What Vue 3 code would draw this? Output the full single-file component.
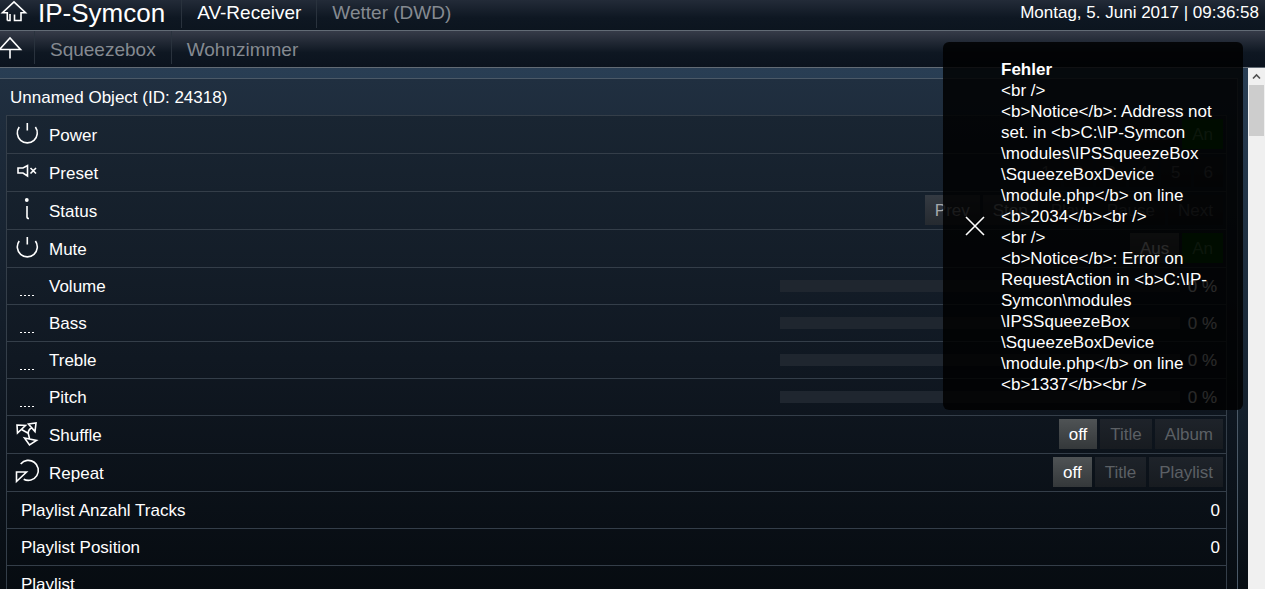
<script setup>
import { ref } from 'vue'

const switchOptions = [{ label: 'Aus', tone: 'on' }, { label: 'An', tone: 'green' }]
const off = (label) => ({ label, tone: 'idle' })

const rows = [
  { label: 'Power', icon: 'power', options: [off('Aus'), { label: 'An', tone: 'green' }] },
  { label: 'Preset', icon: 'speaker', options: ['1', '2', '3', '4', '5', '6'].map(off) },
  { label: 'Status', icon: 'info', options: [{ label: 'Prev', tone: 'dim' }, { label: 'Stop', tone: 'dim' }, off('Play'), off('Pause'), off('Next')] },
  { label: 'Mute', icon: 'power', options: switchOptions },
  { label: 'Volume', icon: 'dots', slider: '0 %' },
  { label: 'Bass', icon: 'dots', slider: '0 %' },
  { label: 'Treble', icon: 'dots', slider: '0 %' },
  { label: 'Pitch', icon: 'dots', slider: '0 %' },
  { label: 'Shuffle', icon: 'shuffle', options: [{ label: 'off', tone: 'on' }, off('Title'), off('Album')] },
  { label: 'Repeat', icon: 'repeat', options: [{ label: 'off', tone: 'on' }, off('Title'), off('Playlist')] },
  { label: 'Playlist Anzahl Tracks', value: '0' },
  { label: 'Playlist Position', value: '0' },
  { label: 'Playlist', value: '' },
]

const message = `<br />
<b>Notice</b>: Address not
set. in <b>C:\\IP-Symcon
\\modules\\IPSSqueezeBox
\\SqueezeBoxDevice
\\module.php</b> on line
<b>2034</b><br />
<br />
<b>Notice</b>: Error on
RequestAction in <b>C:\\IP-
Symcon\\modules
\\IPSSqueezeBox
\\SqueezeBoxDevice
\\module.php</b> on line
<b>1337</b><br />`

const open = ref(true)
</script>

<template>
  <div class="page">
    <header class="bar top">
      <a href="#" class="glyph" aria-label="Home">
        <svg width="28" height="24" viewBox="0 0 28 24"><path d="M7.300 20.500V12.700H2.500L14 1.800L25.500 12.700H21V20.500H14.500V14.500M7.300 20.500H10V14" /></svg>
      </a>
      <a href="#" class="brand">IP-Symcon</a>
      <a href="#" class="tab active">AV-Receiver</a>
      <a href="#" class="tab">Wetter (DWD)</a>
      <time class="clock">Montag, 5. Juni 2017 | 09:36:58</time>
    </header>
    <nav class="bar sub">
      <a href="#" class="glyph up" aria-label="Nach oben">
        <svg width="24" height="24" viewBox="0 0 24 24"><path d="M-0.500 14.500 10 3 20.500 14.500ZM10 14.500V23.500" /></svg>
      </a>
      <a href="#" class="tab">Squeezebox</a>
      <a href="#" class="tab">Wohnzimmer</a>
    </nav>

    <div class="body">
      <main class="content">
        <section class="panel">
          <h1>Unnamed Object (ID: 24318)</h1>
          <ul class="rows">
            <li v-for="row in rows" :key="row.label" class="row" :class="{ tall: row.options }">
              <svg v-if="row.icon" class="icon" width="28" height="28" viewBox="0 0 28 28">
                <path v-if="row.icon === 'power'" d="M13.300 3V10.500M5.200 7A10 10 0 1 0 21.400 7" />
                <path v-else-if="row.icon === 'speaker'" d="M4 10H9L13.500 7.500V18L9 15H4ZM16.500 10 22 15.500M22 10 16.500 15.500" />
                <template v-else-if="row.icon === 'info'">
                  <circle cx="12.800" cy="4" r="1.900" class="solid" />
                  <path d="M13 10V21Q13 22.500 15 22.500" />
                </template>
                <path v-else-if="row.icon === 'dots'" class="dots" d="M6 23.500H21" />
                <path v-else-if="row.icon === 'shuffle'" d="M3 5 11.500 5.500 3.500 13ZM14.500 4 22 3 21 11.500ZM10.500 18 22.500 20.500 15.500 25ZM7.500 9.500 14.200 13.200M18 7.500Q14.200 9.500 14.200 13.200L15.500 18.500" />
                <path v-else d="M6.700 5.900A10 10 0 1 1 9.700 21.200M2.500 14H12.500L2.500 23.500Z" />
              </svg>
              <span class="label">{{ row.label }}</span>
              <div v-if="row.options" class="options">
                <button v-for="o in row.options" :key="o.label" type="button" :class="o.tone">{{ o.label }}</button>
              </div>
              <template v-else-if="row.slider">
                <input type="range" min="0" max="100" value="0" :aria-label="row.label" />
                <span class="percent">{{ row.slider }}</span>
              </template>
              <span v-else class="value">{{ row.value }}</span>
            </li>
          </ul>
        </section>
      </main>
      <div class="scroll" aria-hidden="true">
        <svg width="17" height="17" viewBox="0 0 17 17"><path d="M5 10.500 8.500 7 12 10.500" /></svg>
        <div class="thumb"></div>
      </div>
    </div>

    <aside v-if="open" class="toast" role="alert">
      <button type="button" class="close" aria-label="Schließen" @click="open = false">
        <svg width="20" height="20" viewBox="0 0 20 20"><path d="M1 1 19 19M19 1 1 19" /></svg>
      </button>
      <div>
        <strong>Fehler</strong>
        <p>{{ message }}</p>
      </div>
    </aside>
  </div>
</template>

<style>
body {
  margin: 0;
  background: #070c11;
}
</style>

<style scoped>
.page {
  position: relative;
  display: flex;
  flex-direction: column;
  height: 100vh;
  overflow: hidden;
  color: #fff;
  font: 17px/21px "Liberation Sans", Arial, sans-serif;
}
.bar {
  display: flex;
  flex: none;
  box-sizing: border-box;
  border-bottom: 1px solid #626b75;
  font-size: 19px;
}
.top {
  height: 31px;
  line-height: 26px;
  background: linear-gradient(#232b38, #0e1722 60%, #0c151f);
}
.sub {
  height: 37px;
  line-height: 37px;
  background: linear-gradient(#363b48, #0e1722 60%, #0b131e);
}
.bar a {
  color: #fff;
  text-decoration: none;
}
.glyph {
  width: 28px;
}
.up {
  width: 34px;
  padding-top: 4px;
  box-sizing: border-box;
}
svg {
  display: block;
  fill: none;
  stroke: #fff;
  stroke-width: 1.6;
}
.bar .brand {
  padding: 0 16px 0 10px;
  font-size: 26px;
}
.bar .tab {
  height: 28px;
  padding: 0 15px;
  border-left: 1px solid #29323d;
  color: #858a91;
}
.sub .tab {
  height: 33px;
}
.bar .tab.active {
  color: #fff;
}
.clock {
  margin-left: auto;
  padding-right: 6px;
  font-size: 17px;
}
.body {
  display: flex;
  flex: 1;
  min-height: 0;
}
.content {
  flex: 1;
  min-width: 0;
  overflow: hidden;
  padding: 10px 10px 0 0;
  background: linear-gradient(#293e54, #1a2938 50%, #070d13);
}
.panel {
  padding: 0 10px 0 6px;
  border: solid #4b5967;
  border-width: 1px 1px 0 0;
  background: linear-gradient(#202f40, #0e1620 65%, #070c11);
}
h1 {
  margin: 0;
  padding: 2px 4px 0;
  font-size: 17px;
  font-weight: 400;
  line-height: 34px;
}
.rows {
  margin: 0;
  padding: 0;
  list-style: none;
  border: solid #343e49;
  border-width: 0 1px;
  background: linear-gradient(#192532, #101822 50%, #060b10);
}
.row {
  display: flex;
  align-items: center;
  box-sizing: border-box;
  height: 37px;
  padding: 0 3px 0 14px;
  border-top: 1px solid #343e49;
}
.row.tall {
  height: 38px;
  padding-bottom: 1px;
}
.tall .label {
  padding-top: 2px;
}
.icon {
  width: 28px;
  margin: 0 7px 0 -7px;
}
.icon .solid {
  fill: #fff;
  stroke: none;
}
.icon .dots {
  stroke-width: 1;
  stroke-dasharray: 2 2;
}
.label {
  flex: 1;
}
.options {
  display: flex;
  gap: 3px;
}
.options button {
  height: 30px;
  padding: 0 10px;
  border: 0;
  color: #5c6065;
  background: linear-gradient(#1e232a, #171b20);
  font: inherit;
}
.options .on {
  color: #fff;
  background: linear-gradient(#4f5355, #34383a);
}
.options .dim {
  color: #a4a7ab;
  background: linear-gradient(#343a42, #252a30);
}
.options .green {
  color: #4d8a4d;
  background: #004c00;
}
input {
  appearance: none;
  width: 400px;
  height: 12px;
  margin: 0;
  background: #1f262f;
}
input::-webkit-slider-thumb {
  appearance: none;
  width: 0;
}
.percent {
  width: 37px;
  padding-right: 6px;
  text-align: right;
}
.value {
  padding-right: 3px;
}
.scroll {
  flex: none;
  width: 17px;
  background: #f0f0f0;
}
.scroll svg {
  stroke: #505050;
}
.thumb {
  height: 51px;
  margin: 0 1px;
  background: #cdcdcd;
}
.toast {
  position: absolute;
  top: 42px;
  right: 22px;
  display: flex;
  align-items: center;
  box-sizing: border-box;
  width: 300px;
  padding: 17px 22px 15px;
  border-radius: 6px;
  background: rgba(0, 0, 0, 0.84);
}
.close {
  width: 20px;
  margin: 0 16px 2px 0;
  padding: 0;
  border: 0;
  background: none;
}
.toast p {
  margin: 0;
  white-space: pre;
}
</style>
